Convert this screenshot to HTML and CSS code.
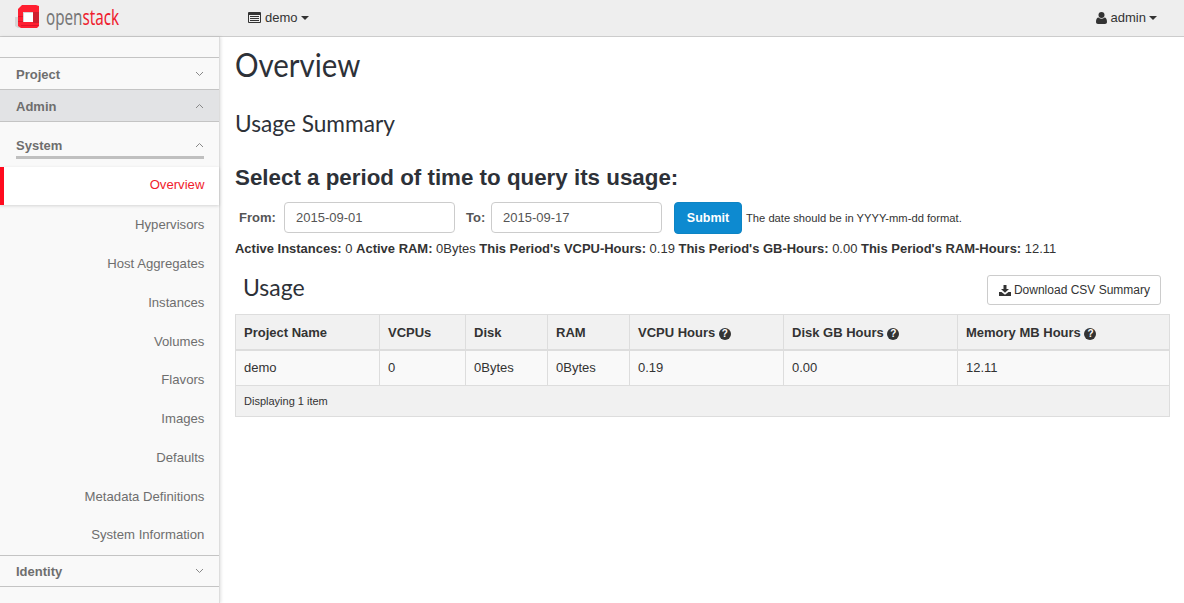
FILE: index.html
```html
<!DOCTYPE html>
<html>
<head>
  <title>Usage Overview - OpenStack Dashboard</title>
  <link rel="stylesheet" href="styles.css">
</head>
<body>
  <header class="topbar">
    <a class="brand">
      <svg class="brand-logo" width="26" height="26" viewBox="0 0 26 26">
        <path fill="#d4d4d4" d="M0 14h3v8l4 2v1H3l-3-2z"/>
        <path fill="#ff1f30" fill-rule="evenodd" d="M3 6 7 2h14l3 1v20l-2 2H6l-3-2zM8 9v10h10V9z"/>
        <path fill="#cf1f2e" d="M18 9h6v11h-6z"/>
        <path fill="#e0142a" d="M3 13h5v1H3zM3 18h5v1H3zM6 22h18v1H6z"/>
        <path fill="#fff" d="M8 9h10v10H8z"/>
        <path fill="#d6d6d6" d="M8 9h10v1H9v9H8z"/>
      </svg>
      <span class="brand-text">open<span class="brand-red">stack</span></span>
    </a>
    <a class="top-menu project-menu">
      <svg class="icon" width="13" height="11" viewBox="0 0 13 11">
        <path fill="#333" fill-rule="evenodd" d="M1 0h11a1 1 0 0 1 1 1v9a1 1 0 0 1-1 1H1a1 1 0 0 1-1-1V1a1 1 0 0 1 1-1zm0 3v7h11V3zm1 1h9v1H2zm0 2h9v1H2zm0 2h9v1H2z"/>
      </svg>
      demo<span class="caret"></span>
    </a>
    <a class="top-menu user-menu">
      <svg class="icon" width="11" height="12" viewBox="0 0 11 12">
        <circle cx="5.500" cy="3" r="3" fill="#333"/>
        <path fill="#333" d="M0 10c0-3 1-4.500 2.500-4.500 1 .8 2 1.200 3 1.200s2-.4 3-1.200C10 5.500 11 7 11 10c0 1.300-.8 2-2 2H2c-1.200 0-2-.7-2-2z"/>
      </svg>
      admin<span class="caret"></span>
    </a>
  </header>

  <div class="page">
    <nav class="sidebar">
      <div class="panel-head">
        Project
        <svg class="chev" width="9" height="6" viewBox="0 0 9 6"><path d="M1 1l3.500 3.500L8 1" fill="none" stroke="#888" stroke-width="1"/></svg>
      </div>
      <div class="panel-head active-dash">
        Admin
        <svg class="chev" width="9" height="6" viewBox="0 0 9 6"><path d="M1 5l3.500-3.500L8 5" fill="none" stroke="#888" stroke-width="1"/></svg>
      </div>
      <div class="group-head">
        <div class="group-title">
          System
          <svg class="chev" width="9" height="6" viewBox="0 0 9 6"><path d="M1 5l3.500-3.500L8 5" fill="none" stroke="#888" stroke-width="1"/></svg>
        </div>
      </div>
      <a class="nav-link current">Overview</a>
      <a class="nav-link">Hypervisors</a>
      <a class="nav-link">Host Aggregates</a>
      <a class="nav-link">Instances</a>
      <a class="nav-link">Volumes</a>
      <a class="nav-link">Flavors</a>
      <a class="nav-link">Images</a>
      <a class="nav-link">Defaults</a>
      <a class="nav-link">Metadata Definitions</a>
      <a class="nav-link">System Information</a>
      <div class="panel-head identity">
        Identity
        <svg class="chev" width="9" height="6" viewBox="0 0 9 6"><path d="M1 1l3.500 3.500L8 1" fill="none" stroke="#888" stroke-width="1"/></svg>
      </div>
    </nav>

    <main class="content">
      <h1>Overview</h1>
      <h2>Usage Summary</h2>
      <h3>Select a period of time to query its usage:</h3>

      <form class="date-form">
        <label>From:</label>
        <input class="date-input" type="text" value="2015-09-01">
        <label class="to-label">To:</label>
        <input class="date-input" type="text" value="2015-09-17">
        <button class="btn-submit" type="button">Submit</button>
        <span class="hint">The date should be in YYYY-mm-dd format.</span>
      </form>

      <p class="totals">
        <b>Active Instances:</b> 0 <b>Active RAM:</b> 0Bytes <b>This Period's VCPU-Hours:</b> 0.19 <b>This Period's GB-Hours:</b> 0.00 <b>This Period's RAM-Hours:</b> 12.11
      </p>

      <div class="table-title">
        <h2 class="usage-title">Usage</h2>
        <button class="btn-download" type="button">
          <svg class="icon" width="12" height="11" viewBox="0 0 12 11">
            <path fill="#333" d="M4.500 0h3v4H10L6 7.800 2 4h2.500zM0 7h2.500L6 9.800 9.500 7H12v4H0z"/>
          </svg>
          Download CSV Summary
        </button>
      </div>

      <table class="usage-table">
        <thead>
          <tr>
            <th class="col-name">Project Name</th>
            <th class="col-vcpu">VCPUs</th>
            <th class="col-disk">Disk</th>
            <th class="col-ram">RAM</th>
            <th class="col-hours">VCPU Hours <span class="help">?</span></th>
            <th class="col-gb">Disk GB Hours <span class="help">?</span></th>
            <th>Memory MB Hours <span class="help">?</span></th>
          </tr>
        </thead>
        <tbody>
          <tr class="data-row">
            <td>demo</td>
            <td>0</td>
            <td>0Bytes</td>
            <td>0Bytes</td>
            <td>0.19</td>
            <td>0.00</td>
            <td>12.11</td>
          </tr>
        </tbody>
        <tfoot>
          <tr>
            <td colspan="7">Displaying 1 item</td>
          </tr>
        </tfoot>
      </table>
    </main>
  </div>
</body>
</html>
```

FILE: styles.css
```css
html, body {
  height: 100%;
}
body {
  margin: 0;
  font-family: "Liberation Sans", Arial, sans-serif;
  font-size: 13px;
  color: #333;
  background: #fff;
  overflow: hidden;
}
.topbar {
  display: flex;
  align-items: center;
  height: 36px;
  background: #eee;
  border-bottom: 1px solid #ccc;
}
.brand {
  display: flex;
  align-items: center;
  gap: 5px;
  width: 248px;
  padding-left: 15px;
  box-sizing: border-box;
  margin-top: -4px;
}
.brand-text {
  display: inline-block;
  font-family: "Noto Sans", sans-serif;
  font-size: 22px;
  color: #777;
  transform: scaleX(0.69);
  transform-origin: left center;
}
.brand-red {
  color: #ee1c2e;
}
.top-menu {
  display: flex;
  align-items: center;
  margin-top: -1px;
  color: #333;
}
.icon {
  margin-right: 4px;
}
.caret {
  width: 0;
  height: 0;
  margin-left: 3px;
  border-top: 4px solid #333;
  border-left: 4px solid transparent;
  border-right: 4px solid transparent;
}
.user-menu {
  margin-left: auto;
  margin-right: 27px;
}
.page {
  display: flex;
  height: 566px;
}
.sidebar {
  width: 220px;
  flex-shrink: 0;
  box-sizing: border-box;
  padding-top: 20px;
  background: #f9f9f9;
  border-right: 1px solid #ddd;
  box-shadow: 1px 0 3px rgba(0, 0, 0, 0.12);
  position: relative;
  color: #6e6e6e;
}
.panel-head {
  display: flex;
  align-items: center;
  justify-content: space-between;
  height: 30px;
  padding: 1px 15px 0 16px;
  border-top: 1px solid #c4c4c4;
  font-weight: bold;
  color: #6e6e6e;
}
.active-dash {
  background: #e2e3e5;
}
.group-head {
  border-top: 1px solid #c4c4c4;
  padding: 0 15px 0 16px;
}
.group-title {
  display: flex;
  align-items: center;
  justify-content: space-between;
  height: 22px;
  padding-top: 12px;
  margin-bottom: 8px;
  border-bottom: 3px solid #c0c0c0;
  font-weight: bold;
}
.nav-link {
  display: block;
  height: 38.750px;
  line-height: 38.750px;
  padding-right: 14.600px;
  text-align: right;
  font-size: 13.150px;
  color: #6e6e6e;
}
.current {
  height: 38px;
  line-height: 36px;
  background: #fff;
  color: #f01c2c;
  border-left: 4px solid #ff0a1e;
  box-shadow: 0 1px 3px rgba(0, 0, 0, 0.15);
  margin-bottom: 1.300px;
}
.identity {
  height: 29px;
  margin-top: -0.500px;
  border-bottom: 1px solid #c4c4c4;
}
.content {
  flex: 1;
  padding: 0 14px 0 15px;
  min-width: 0;
}
h1, h2 {
  font-family: Lato, "Noto Sans", sans-serif;
  font-weight: normal;
  color: #2d3138;
  margin: 0;
}
h1 {
  font-size: 32px;
  line-height: 36px;
  margin-top: 10px;
  transform: scaleX(0.92);
  transform-origin: left center;
}
h2 {
  font-size: 22.700px;
  line-height: 28px;
  margin-top: 27px;
}
h3 {
  font-size: 22.350px;
  line-height: 26px;
  color: #2d3138;
  margin: 27px 0 0 0;
}
.date-form {
  display: flex;
  align-items: center;
  margin-top: 11px;
  height: 31px;
}
.date-form label {
  font-weight: bold;
  color: #555;
  padding-left: 4px;
  width: 49px;
  box-sizing: border-box;
}
.date-form .to-label {
  width: 36px;
  padding-left: 11px;
}
.date-input {
  width: 171px;
  height: 31px;
  box-sizing: border-box;
  padding: 0 11px;
  border: 1px solid #ccc;
  border-radius: 4px;
  font-family: "Liberation Sans", sans-serif;
  font-size: 13px;
  color: #555;
}
.btn-submit {
  width: 68px;
  height: 32px;
  margin-left: 12px;
  padding: 0;
  border: 1px solid #0d84c4;
  border-radius: 4px;
  background: #0d8ad0;
  color: #fff;
  font-family: "Liberation Sans", sans-serif;
  font-size: 12.500px;
  font-weight: bold;
}
.hint {
  margin-left: 4px;
  font-size: 11.200px;
  color: #333;
}
.totals {
  margin: 7px 0 0 0;
  line-height: 18px;
  font-size: 12.970px;
  color: #333;
}
.table-title {
  display: flex;
  align-items: center;
  justify-content: space-between;
  margin-top: 10px;
  height: 38px;
}
.usage-title {
  margin: 0 0 0 8px;
  font-size: 23px;
}
.btn-download {
  display: flex;
  align-items: center;
  height: 30px;
  margin-top: 6px;
  margin-right: 9px;
  padding: 0 10px 0 11px;
  background: #fff;
  border: 1px solid #ccc;
  border-radius: 3px;
  color: #333;
  font-family: "Liberation Sans", sans-serif;
  font-size: 12px;
}
.btn-download .icon {
  margin-right: 3px;
}
.usage-table {
  width: 935px;
  margin-top: 8px;
  border-collapse: collapse;
  table-layout: fixed;
  border: 1px solid #ddd;
}
.usage-table th, .usage-table td {
  padding: 0 8px;
  border: 1px solid #ddd;
  text-align: left;
}
.usage-table th {
  height: 34px;
  background: #f1f1f1;
  border-bottom: 2px solid #ddd;
}
.usage-table td {
  height: 34px;
  background: #f9f9f9;
}
.usage-table .data-row td {
  height: 32px;
  padding-bottom: 2px;
}
.usage-table tfoot td {
  height: 30px;
  background: #f1f1f1;
  font-size: 11px;
}
.col-name { width: 127px; }
.col-vcpu { width: 69px; }
.col-disk { width: 65px; }
.col-ram { width: 65px; }
.col-hours { width: 137px; }
.col-gb { width: 157px; }
.help {
  display: inline-block;
  width: 12px;
  height: 12px;
  line-height: 12px;
  border-radius: 50%;
  background: #333;
  color: #fff;
  font-size: 10px;
  text-align: center;
}
```
